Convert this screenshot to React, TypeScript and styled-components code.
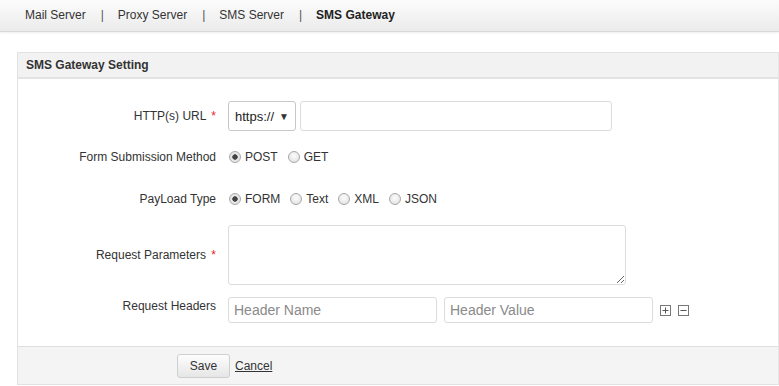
import React from 'react'
import styled, { createGlobalStyle } from 'styled-components'

const GlobalStyle = createGlobalStyle`
	body {
		margin: 0;
		background: #fff;
		font-family: 'Liberation Sans', Arial, sans-serif;
		font-size: 12px;
		color: #333;
	}
`

const tabs = ['Mail Server', 'Proxy Server', 'SMS Server', 'SMS Gateway']

function Radio({ label, checked }: { label: string; checked?: boolean }) {
	return (
		<RadioLabel>
			<RadioInput type='radio' defaultChecked={checked} name={label} />
			{label}
		</RadioLabel>
	)
}

function SquareIcon({ plus }: { plus?: boolean }) {
	return (
		<svg width='11' height='11' viewBox='0 0 11 11'>
			<rect x='0.5' y='0.5' width='10' height='10' fill='#fff' stroke='#777' />
			<line x1='2.5' y1='5.5' x2='8.5' y2='5.5' stroke='#555' />
			{plus && <line x1='5.5' y1='2.5' x2='5.5' y2='8.5' stroke='#555' />}
		</svg>
	)
}

export default function App() {
	return (
		<>
			<GlobalStyle />
			{/* top tab navigation */}
			<TopBar>
				{tabs.map((t, i) => (
					<React.Fragment key={t}>
						{i > 0 && <Divider>|</Divider>}
						<TabLink active={i === tabs.length - 1}>{t}</TabLink>
					</React.Fragment>
				))}
			</TopBar>

			<Panel>
				<PanelHeader>SMS Gateway Setting</PanelHeader>
				<PanelBody>
					<Row space={14}>
						<Label>
							HTTP(s) URL <Req>*</Req>
						</Label>
						<Controls>
							<Select>
								<span>https://</span>
								<Caret>▼</Caret>
							</Select>
							<TextInput width={312} height={30} />
						</Controls>
					</Row>
					<Row space={18} height={24}>
						<Label>Form Submission Method</Label>
						<Controls>
							<Radio label='POST' checked />
							<Radio label='GET' />
						</Controls>
					</Row>
					<Row space={14} height={24}>
						<Label>PayLoad Type</Label>
						<Controls>
							<Radio label='FORM' checked />
							<Radio label='Text' />
							<Radio label='XML' />
							<Radio label='JSON' />
						</Controls>
					</Row>
					<Row space={12}>
						<Label>
							Request Parameters <Req>*</Req>
						</Label>
						<Controls>
							<TextArea />
						</Controls>
					</Row>
					<Row space={0}>
						<Label top>Request Headers</Label>
						<Controls gap={7}>
							<TextInput width={209} height={26} placeholder='Header Name' />
							<TextInput width={209} height={26} placeholder='Header Value' />
							<Icons>
								<SquareIcon plus />
								<SquareIcon />
							</Icons>
						</Controls>
					</Row>
				</PanelBody>
				<PanelFooter>
					<SaveButton>Save</SaveButton>
					<CancelLink href='#'>Cancel</CancelLink>
				</PanelFooter>
			</Panel>
		</>
	)
}

const TopBar = styled.div`
	display: flex;
	align-items: center;
	height: 30px;
	padding-left: 25px;
	padding-bottom: 1px;
	background: linear-gradient(#fcfcfc, #ebebeb);
	border-bottom: 1px solid #d9d9d9;
	box-shadow: 0 1px 2px rgba(0, 0, 0, 0.07);
`
const TabLink = styled.span<{ active?: boolean }>`
	font-size: 12px;
	color: ${(p) => (p.active ? '#222' : '#333')};
	font-weight: ${(p) => (p.active ? 'bold' : 'normal')};
`
const Divider = styled.span`
	color: #555;
	padding: 0 14px 0 15px;
`
const Panel = styled.div`
	margin: 20px 0 0 17px;
	border: 1px solid #e2e2e2;
	border-right-color: #e6e6e6;
`
const PanelHeader = styled.div`
	height: 24px;
	line-height: 24px;
	padding-left: 8px;
	background: #f2f2f2;
	border-bottom: 2px solid #e3e3e3;
	font-weight: bold;
	color: #333;
`
const PanelBody = styled.div`
	padding: 22px 0 23px;
`
const Row = styled.div<{ space: number; height?: number }>`
	display: grid;
	grid-template-columns: 198px 1fr;
	column-gap: 12px;
	align-items: center;
	margin-bottom: ${(p) => p.space}px;
	min-height: ${(p) => (p.height ? p.height + 'px' : 'auto')};
`
const Label = styled.div<{ top?: boolean }>`
	text-align: right;
	color: #333;
	align-self: ${(p) => (p.top ? 'start' : 'center')};
	padding-top: ${(p) => (p.top ? '2px' : '0')};
`
const Req = styled.span`
	color: #e22;
	margin-left: 2px;
`
const Controls = styled.div<{ gap?: number }>`
	display: flex;
	align-items: center;
	gap: ${(p) => p.gap ?? 4}px;
`
const Select = styled.div`
	box-sizing: border-box;
	display: flex;
	align-items: center;
	justify-content: space-between;
	width: 68px;
	height: 30px;
	padding: 0 6px 0 6px;
	border: 1px solid #c8c8c8;
	border-radius: 3px;
	background: #fff;
	font-size: 13px;
	color: #222;
`
const Caret = styled.span`
	font-size: 10px;
	color: #333;
`
const TextInput = styled.input<{ width: number; height: number }>`
	box-sizing: border-box;
	width: ${(p) => p.width}px;
	height: ${(p) => p.height}px;
	padding: 0 5px;
	border: 1px solid #dcdcdc;
	border-radius: 3px;
	font-family: 'Liberation Sans', Arial, sans-serif;
	font-size: 14px;
	color: #333;
	outline: none;
	&::placeholder {
		color: #8a8a8a;
	}
`
const TextArea = styled.textarea`
	box-sizing: border-box;
	width: 398px;
	height: 60px;
	border: 1px solid #dcdcdc;
	border-radius: 3px;
	resize: both;
	outline: none;
`
const RadioLabel = styled.label`
	display: inline-flex;
	align-items: center;
	gap: 4px;
	margin-right: 5px;
	color: #333;
`
const RadioInput = styled.input`
	appearance: none;
	margin: 0 0 0 1px;
	width: 12px;
	height: 12px;
	border-radius: 50%;
	border: 1px solid #a8a8a8;
	background: radial-gradient(circle at 50% 40%, #fdfdfd, #dcdcdc);
	box-sizing: border-box;
	&:checked {
		background: radial-gradient(circle, #444 0 2.4px, #e6e6e6 3px);
	}
`
const Icons = styled.div`
	display: flex;
	gap: 7px;
	padding-top: 1px;
`
const PanelFooter = styled.div`
	display: flex;
	align-items: center;
	gap: 5px;
	height: 37px;
	padding-left: 159px;
	background: #f4f4f4;
	border-top: 1px solid #dedede;
`
const SaveButton = styled.button`
	width: 53px;
	height: 24px;
	border: 1px solid #cfcfcf;
	border-radius: 3px;
	background: linear-gradient(#fdfdfd, #e6e6e6);
	font-family: 'Liberation Sans', Arial, sans-serif;
	font-size: 12px;
	color: #333;
`
const CancelLink = styled.a`
	color: #333;
	font-size: 12px;
	text-decoration: underline;
`
